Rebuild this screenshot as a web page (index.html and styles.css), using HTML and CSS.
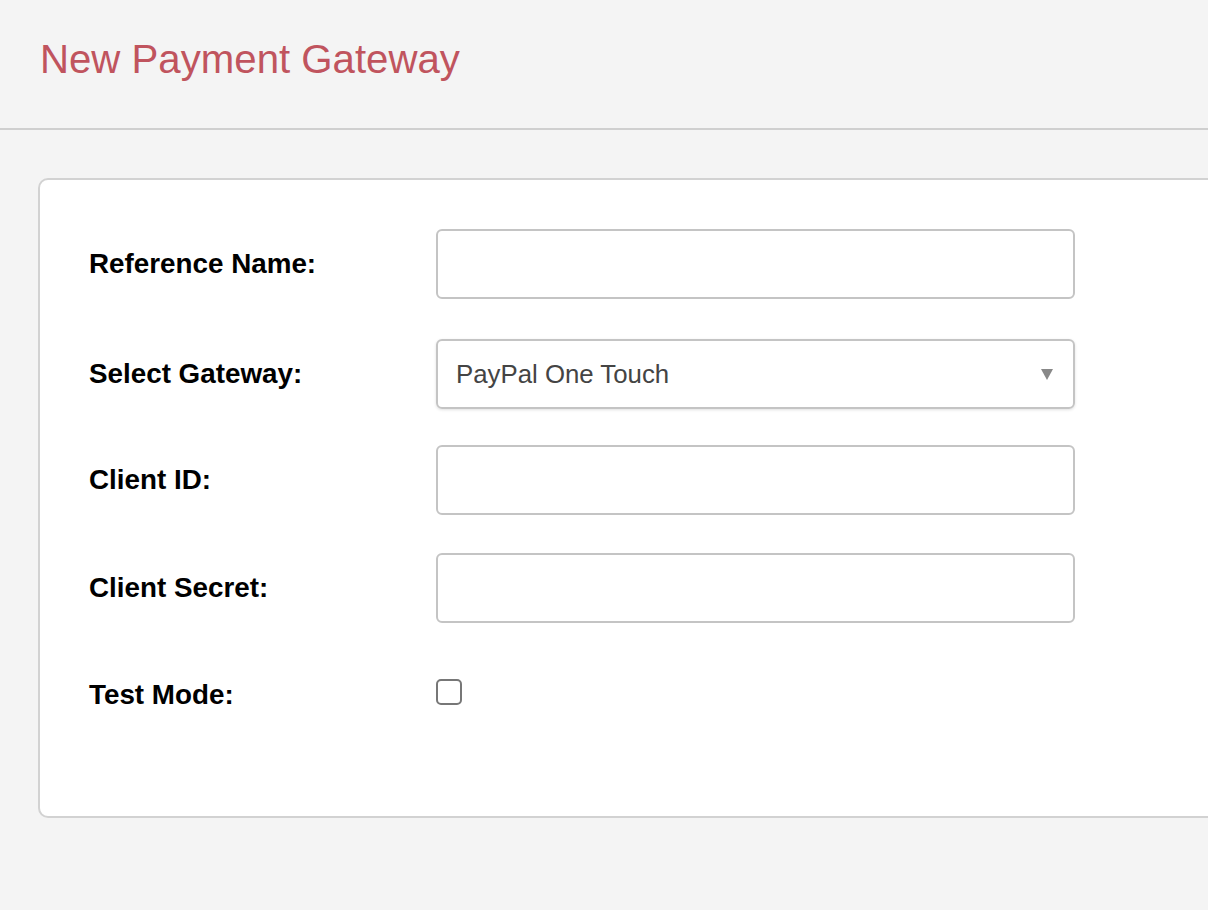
FILE: index.html
```html
<!DOCTYPE html>
<html lang="en">
<head>
    <meta charset="UTF-8">
    <meta name="viewport" content="width=device-width, initial-scale=1.0">
    <title>New Payment Gateway</title>
    <link rel="stylesheet" href="styles.css">
</head>
<body>

    <div class="cabecera">
        <h1>New Payment Gateway</h1>
    </div>

    <div class="tarjeta">
        <form class="formulario">
            <div class="fila">
                <label for="nombre">Reference Name:</label>
                <input type="text" id="nombre">
            </div>
            <div class="fila fila-select">
                <label for="pasarela">Select Gateway:</label>
                <div class="select">
                    <span>PayPal One Touch</span>
                    <span class="flecha"></span>
                </div>
            </div>
            <div class="fila">
                <label for="cliente">Client ID:</label>
                <input type="text" id="cliente">
            </div>
            <div class="fila">
                <label for="secreto">Client Secret:</label>
                <input type="text" id="secreto">
            </div>
            <div class="fila fila-check">
                <label for="prueba">Test Mode:</label>
                <span class="check" id="prueba"></span>
            </div>
        </form>
    </div>

</body>
</html>
```

FILE: styles.css
```css
body {
    font-family: "Liberation Sans", Arial, sans-serif;
    background-color: #f4f4f4;
    margin: 0;
    overflow-x: hidden;
}

.cabecera {
    padding: 36px 40px 44px;
    border-bottom: 2px solid #cfcfcf;
}

h1 {
    margin: 0;
    font-size: 40.2px;
    line-height: 48px;
    font-weight: normal;
    color: #c0545e;
}

.tarjeta {
    background-color: #fff;
    margin: 48px -20px 0 38px;
    border: 2px solid #d2d2d2;
    border-radius: 10px;
    padding: 49px 0 85px 49px;
}

.formulario {
    display: flex;
    flex-direction: column;
    gap: 38px;
}

.fila {
    display: flex;
    align-items: center;
    height: 70px;
}

.fila label {
    width: 347px;
    font-size: 27.8px;
    font-weight: bold;
    color: #000;
}

.fila input {
    box-sizing: border-box;
    width: 639px;
    height: 70px;
    border: 2px solid #c4c4c4;
    border-radius: 6px;
    padding: 0 18px;
    font-size: 25px;
    font-family: inherit;
}

.fila-select {
    margin-top: 2px;
    margin-bottom: -2px;
}

.select {
    box-sizing: border-box;
    width: 639px;
    height: 70px;
    border: 2px solid #c4c4c4;
    border-radius: 6px;
    padding: 0 20px 0 18px;
    display: flex;
    align-items: center;
    justify-content: space-between;
    font-size: 25.8px;
    color: #444;
    box-shadow: 0 1px 3px rgba(0, 0, 0, 0.12);
}

.flecha {
    width: 0;
    height: 0;
    border-left: 6px solid transparent;
    border-right: 6px solid transparent;
    border-top: 11px solid #888;
}

.fila-check {
    align-items: flex-start;
}

.fila-check label {
    align-self: center;
    margin-top: -2px;
}

.check {
    box-sizing: border-box;
    width: 26px;
    height: 26px;
    margin-top: 18px;
    border: 2px solid #777;
    border-radius: 5px;
}
```
